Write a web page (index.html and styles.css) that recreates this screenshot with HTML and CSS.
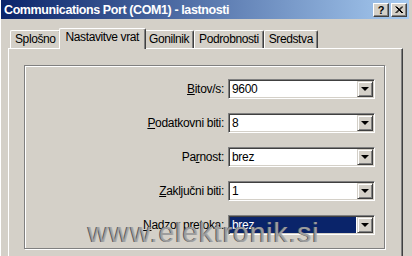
FILE: index.html
```html
<!DOCTYPE html>
<html>
<head>
  <meta charset="utf-8">
  <title>Communications Port (COM1) - lastnosti</title>
  <link rel="stylesheet" href="styles.css">
</head>
<body>
  <div class="window">
    <div class="titlebar">
      <span class="title">Communications Port (COM1) - lastnosti</span>
      <div class="title-buttons">
        <span class="tbtn help">?</span>
        <span class="tbtn close">
          <svg width="8" height="7" viewBox="0 0 8 7">
            <path d="M0.5 0.5 L7 7 M1.5 0.5 L8 7 M7 0.5 L0.5 7 M8 0.5 L1.5 7" stroke="#000" stroke-width="1" fill="none"/>
          </svg>
        </span>
      </div>
    </div>

    <div class="content">
      <div class="tabs">
        <div class="tab">Splošno</div>
        <div class="tab active">Nastavitve vrat</div>
        <div class="tab">Gonilnik</div>
        <div class="tab">Podrobnosti</div>
        <div class="tab">Sredstva</div>
      </div>

      <div class="panel">
        <div class="group">
          <label class="field-label"><u>B</u>itov/s:</label>
          <div class="combo"><span class="value">9600</span><span class="drop"></span></div>

          <label class="field-label"><u>P</u>odatkovni biti:</label>
          <div class="combo"><span class="value">8</span><span class="drop"></span></div>

          <label class="field-label">Pa<u>r</u>nost:</label>
          <div class="combo"><span class="value">brez</span><span class="drop"></span></div>

          <label class="field-label"><u>Z</u>aključni biti:</label>
          <div class="combo"><span class="value">1</span><span class="drop"></span></div>

          <label class="field-label"><u>N</u>adzor pretoka:</label>
          <div class="combo"><span class="value selected">brez</span><span class="drop"></span></div>
        </div>
      </div>
    </div>

    <!-- vodni žig čez sliko -->
    <div class="watermark">www.elektronik.si</div>
  </div>
</body>
</html>
```

FILE: styles.css
```css
/* Osnova */
body {
  margin: 0;
  background-color: #d4d0c8;
  font-family: "Liberation Sans", Arial, sans-serif;
  font-size: 12px;
  color: #000;
}

.window {
  position: relative;
  width: 412px;
  height: 256px;
  box-sizing: border-box;
  padding: 0 3px 0 1px;
  box-shadow: inset 1px 0 #fff;
  overflow: hidden;
  display: flex;
  flex-direction: column;
}

/* Naslovna vrstica */
.titlebar {
  height: 19px;
  display: flex;
  align-items: center;
  justify-content: space-between;
  padding-left: 3px;
  background: linear-gradient(to right, #0a246a, #a6caf0);
  color: #fff;
}

.title {
  font-weight: bold;
  font-size: 12.5px;
  letter-spacing: -0.4px;
}

.title-buttons {
  display: flex;
  gap: 2px;
  margin-right: 2px;
}

.tbtn {
  width: 16px;
  height: 14px;
  box-sizing: border-box;
  display: flex;
  align-items: center;
  justify-content: center;
  background-color: #d4d0c8;
  border: 1px solid;
  border-color: #fff #404040 #404040 #fff;
  box-shadow: inset -1px -1px #808080;
  color: #000;
}

.help {
  font-weight: bold;
  font-size: 11px;
  line-height: 12px;
}

/* Zavihki */
.content {
  flex: 1;
  display: flex;
  flex-direction: column;
  padding: 9px 6px 0 7px;
}

.tabs {
  display: flex;
  align-items: flex-end;
  padding-left: 2px;
  height: 20px;
}

.tab {
  height: 18px;
  box-sizing: border-box;
  padding: 0 4px;
  line-height: 17px;
  border-top: 1px solid #fff;
  border-left: 1px solid #fff;
  border-right: 1px solid #404040;
  box-shadow: inset -1px 0 #808080;
  border-radius: 2px 2px 0 0;
  letter-spacing: -0.4px;
  white-space: nowrap;
}

.tab.active {
  position: relative;
  z-index: 1;
  height: 21px;
  margin: 0 -2px -1px;
  padding: 0 6px;
  line-height: 16px;
  background-color: #d4d0c8;
}

.panel {
  flex: 1;
  border-top: 1px solid #fff;
  border-left: 1px solid #fff;
  border-right: 1px solid #404040;
  box-shadow: inset -1px 0 #808080;
}

/* Skupina z nastavitvami */
.group {
  margin: 16px 17px 0 15px;
  height: 184px;
  box-sizing: border-box;
  border: 1px solid #808080;
  box-shadow: inset 1px 1px #fff, 1px 1px #fff;
  padding: 13px 9px 0 0;
  display: grid;
  grid-template-columns: 1fr 147px;
  grid-auto-rows: 20px;
  column-gap: 4px;
  row-gap: 14px;
  align-items: center;
}

.field-label {
  text-align: right;
  letter-spacing: -0.3px;
  white-space: nowrap;
}

.combo {
  height: 20px;
  box-sizing: border-box;
  display: flex;
  border: 1px solid;
  border-color: #808080 #fff #fff #808080;
  box-shadow: inset 1px 1px #404040, inset -1px -1px #d4d0c8;
  background-color: #fff;
  padding: 1px;
}

.value {
  flex: 1;
  margin-right: 1px;
  padding-left: 2px;
  line-height: 16px;
  letter-spacing: -0.3px;
}

.value.selected {
  background-color: #0a246a;
  color: #fff;
}

.drop {
  width: 16px;
  box-sizing: border-box;
  display: flex;
  align-items: center;
  justify-content: center;
  background-color: #d4d0c8;
  border: 1px solid;
  border-color: #d4d0c8 #404040 #404040 #d4d0c8;
  box-shadow: inset 1px 1px #fff, inset -1px -1px #808080;
}

.drop::after {
  content: "";
  border-style: solid;
  border-width: 4px 4px 0 4px;
  border-color: #000 transparent transparent transparent;
}

/* Vodni žig */
.watermark {
  position: absolute;
  left: 88px;
  top: 219px;
  font-size: 28px;
  line-height: 28px;
  letter-spacing: 1px;
  color: rgba(170, 170, 170, 0.85);
  text-shadow: -1px 0 #5a5a5a;
  pointer-events: none;
}
```
